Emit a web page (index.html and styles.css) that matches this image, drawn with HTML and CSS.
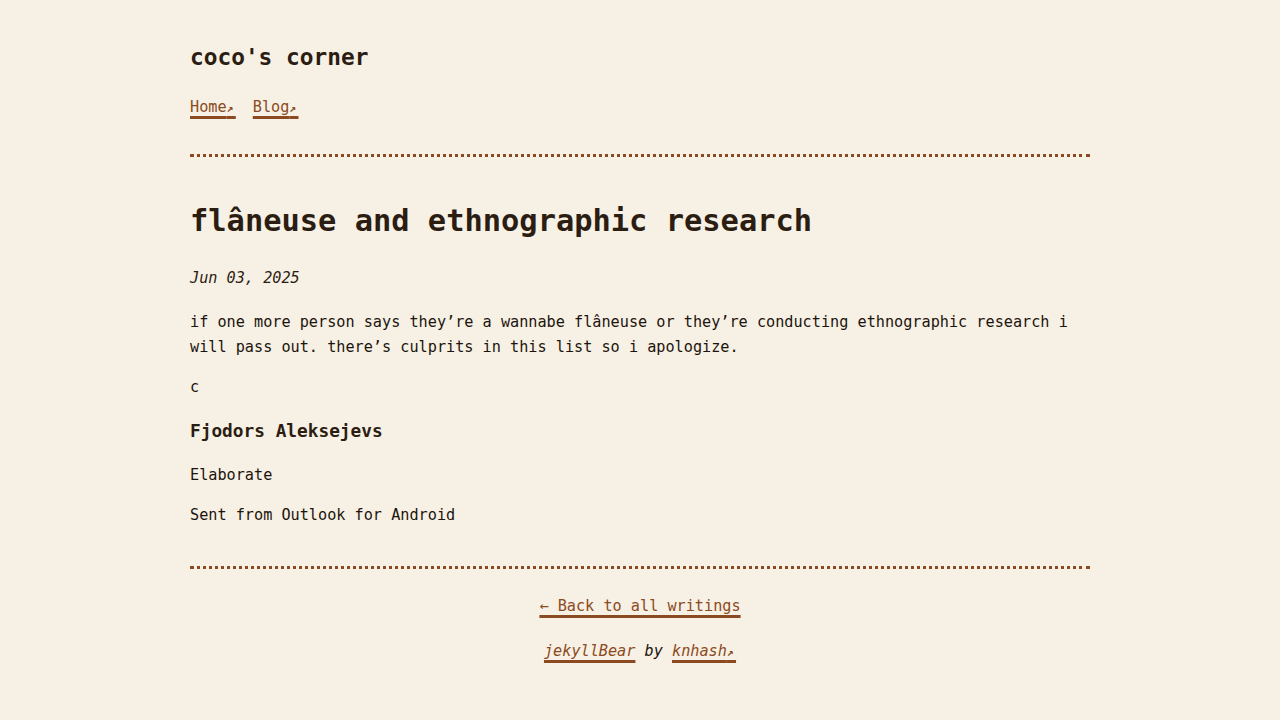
FILE: index.html
```html
<!DOCTYPE html>
<html lang="en">
<head>
<meta charset="utf-8">
<title>flâneuse and ethnographic research | coco's corner</title>
<link rel="stylesheet" href="styles.css">
</head>
<body>
<div class="page">
  <header class="site-header">
    <h2 class="site-title">coco's corner</h2>
    <nav class="site-nav">
      <a class="link" href="#">Home<span class="ext">↗</span></a>
      <a class="link" href="#">Blog<span class="ext">↗</span></a>
    </nav>
  </header>
  <main class="post">
    <h1 class="post-title">flâneuse and ethnographic research</h1>
    <p class="post-date"><time>Jun 03, 2025</time></p>
    <p>if one more person says they’re a wannabe flâneuse or they’re conducting ethnographic research i will pass out. there’s culprits in this list so i apologize.</p>
    <p>c</p>
    <h3 class="post-sub">Fjodors Aleksejevs</h3>
    <p>Elaborate</p>
    <p>Sent from Outlook for Android</p>
  </main>
  <footer class="site-footer">
    <p class="back"><a class="link" href="#">← Back to all writings</a></p>
    <p class="credits"><a class="link" href="#">jekyllBear</a> by <a class="link" href="#">knhash<span class="ext">↗</span></a></p>
  </footer>
</div>
</body>
</html>
```
FILE: styles.css
```css
html, body {
  margin: 0;
  padding: 0;
  background: #f7f0e4;
}
body {
  font-family: "DejaVu Sans Mono", "Liberation Mono", monospace;
  font-size: 15.2px;
  line-height: 25px;
  color: #1c140d;
}
.page {
  width: 900px;
  margin: 0 auto;
  padding-top: 43px;
}
.site-header {
  padding-bottom: 33px;
  border-bottom: 3px dotted #8b4a22;
}
.site-title {
  margin: 0;
  font-size: 22.8px;
  line-height: 28px;
  font-weight: 700;
  color: #2b1d12;
}
.site-nav {
  margin-top: 24px;
  display: flex;
  gap: 17px;
}
.link {
  color: #8b4a22;
  text-decoration: underline;
  text-decoration-color: #8b4a22;
  text-decoration-thickness: 3px;
  text-underline-offset: 4px;
}
.ext {
  font-size: 0.75em;
  font-weight: 700;
  letter-spacing: 2.3px;
}
.post {
  padding-top: 46px;
  padding-bottom: 38px;
}
.post p {
  margin: 15px 0 0;
}
.post-title {
  margin: 0;
  font-size: 30.4px;
  line-height: 36px;
  font-weight: 700;
  color: #2b1d12;
}
.post .post-date {
  margin: 27px 0 19px;
  font-style: italic;
  color: #2b1d12;
}
.post .post-date + p {
  margin-top: 0;
}
.post-sub {
  margin: 20px 0 21px;
  font-size: 17.8px;
  line-height: 22px;
  font-weight: 700;
  color: #2b1d12;
}
.post .post-sub + p {
  margin-top: 0;
}
.site-footer {
  border-top: 3px dotted #8b4a22;
  padding-top: 25px;
  padding-bottom: 40px;
  text-align: center;
}
.site-footer p {
  margin: 0;
}
.credits {
  margin-top: 20px !important;
  font-style: italic;
  color: #1c140d;
}
```
